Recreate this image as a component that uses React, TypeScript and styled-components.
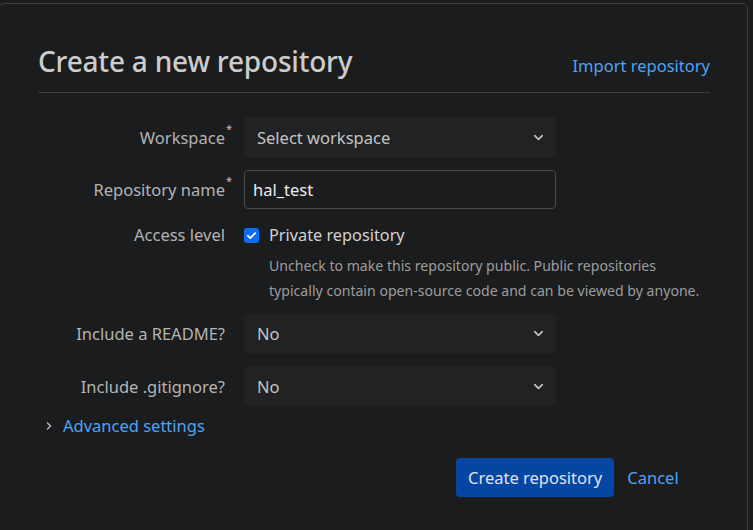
import React from 'react';
import styled, { createGlobalStyle } from 'styled-components';
import { ChevronDown, ChevronRight } from 'lucide-react';

const GlobalStyle = createGlobalStyle`
    html, body {
        margin: 0;
        padding: 0;
        background: #1b1c1e;
        font-family: "Noto Sans", "Open Sans", sans-serif;
        overflow: hidden;
    }
`;

const Page = styled.div`
    height: 530px;
    padding-top: 3px;
    box-sizing: border-box;
`;

const Panel = styled.div`
    margin-left: -2px;
    width: 750px;
    height: 560px;
    box-sizing: border-box;
    border: 1px solid #3b3c3e;
    border-radius: 6px;
    background: #1b1c1e;
    padding: 38px 37px 0 39px;
`;

const Header = styled.div`
    display: flex;
    align-items: baseline;
    justify-content: space-between;
    padding-bottom: 12px;
    border-bottom: 1px solid #3d3e40;
`;

const Title = styled.h1`
    margin: 0;
    font-size: 28px;
    font-weight: 500;
    color: #cccccc;
    letter-spacing: -0.2px;
`;

const Link = styled.a<{ $size?: number }>`
    color: #4ea3f5;
    font-size: ${p => p.$size ?? 16.5}px;
    text-decoration: none;
    cursor: pointer;
`;

const Form = styled.div`
    display: flex;
    flex-direction: column;
    gap: 13px;
    padding-top: 24px;
`;

const Row = styled.div<{ $top?: boolean }>`
    display: grid;
    grid-template-columns: 194px 312px;
    column-gap: 12px;
    align-items: ${p => (p.$top ? 'start' : 'center')};
`;

const Label = styled.label<{ $lineHeight?: number }>`
    text-align: right;
    padding-right: 7px;
    font-size: 16.5px;
    line-height: ${p => (p.$lineHeight ? `${p.$lineHeight}px` : 'normal')};
    color: #b4b4b4;
    white-space: nowrap;
`;

const LabelText = styled.span`
    position: relative;
`;

const Star = styled.span`
    position: absolute;
    right: -7px;
    top: -5px;
    color: #e7b6b6;
    font-size: 11px;
`;

const Select = styled.div`
    height: 40px;
    box-sizing: border-box;
    display: flex;
    align-items: center;
    justify-content: space-between;
    padding: 0 10px 0 13px;
    background: #202224;
    border-radius: 4px;
    font-size: 16.5px;
    color: #c4c4c4;
`;

const Input = styled.div`
    height: 39px;
    box-sizing: border-box;
    display: flex;
    align-items: center;
    padding: 0 8px;
    border: 1px solid #4a4b4d;
    border-radius: 4px;
    font-size: 16.5px;
    color: #ececec;
`;

const AccessBlock = styled.div`
    display: flex;
    flex-direction: column;
    margin-bottom: -3px;
`;

const CheckLine = styled.div`
    display: flex;
    align-items: center;
    gap: 10px;
    height: 26px;
`;

const Box = styled.span`
    width: 15px;
    height: 15px;
    border-radius: 3px;
    background: #0b6df6;
    display: flex;
    align-items: center;
    justify-content: center;
`;

const CheckText = styled.span`
    font-size: 16.3px;
    color: #d2d2d2;
`;

const Help = styled.p`
    margin: 5px 0 0 25px;
    white-space: nowrap;
    font-size: 14.1px;
    line-height: 25px;
    color: #9c9c9c;
`;

const Advanced = styled.div`
    display: flex;
    align-items: center;
    gap: 8px;
    margin-top: -5px;
    margin-left: 5px;
    color: #c4c4c4;
`;

const Actions = styled.div`
    display: flex;
    align-items: center;
    gap: 13px;
    margin-top: 8px;
    padding-left: 418px;
`;

const Button = styled.button`
    height: 39px;
    padding: 0 12px;
    border: none;
    border-radius: 4px;
    background: #0546a2;
    color: #e2e2e2;
    font-family: inherit;
    font-size: 16.5px;
`;

function Dropdown({ value }: { value: string }) {
    return (
        <Select>
            <span>{value}</span>
            <ChevronDown size={15} strokeWidth={2.6} color="#c4c4c4" />
        </Select>
    );
}

function FieldLabel({ text, required }: { text: string; required?: boolean }) {
    return (
        <Label>
            <LabelText>
                {text}
                {required && <Star>*</Star>}
            </LabelText>
        </Label>
    );
}

export default function App() {
    return (
        <Page>
            <GlobalStyle />
            <Panel>
                <Header>
                    <Title>Create a new repository</Title>
                    <Link>Import repository</Link>
                </Header>
                <Form>
                    <Row>
                        <FieldLabel text="Workspace" required />
                        <Dropdown value="Select workspace" />
                    </Row>
                    <Row>
                        <FieldLabel text="Repository name" required />
                        <Input>hal_test</Input>
                    </Row>
                    <Row $top>
                        <Label $lineHeight={26}>Access level</Label>
                        <AccessBlock>
                            <CheckLine>
                                <Box>
                                    <svg width="11" height="11" viewBox="0 0 12 12">
                                        <path d="M2 6.2l2.6 2.6L10 3.4" fill="none" stroke="#fff" strokeWidth="2" strokeLinecap="round" strokeLinejoin="round" />
                                    </svg>
                                </Box>
                                <CheckText>Private repository</CheckText>
                            </CheckLine>
                            <Help>
                                Uncheck to make this repository public. Public repositories
                                <br />
                                typically contain open-source code and can be viewed by anyone.
                            </Help>
                        </AccessBlock>
                    </Row>
                    <Row>
                        <FieldLabel text="Include a README?" />
                        <Dropdown value="No" />
                    </Row>
                    <Row>
                        <FieldLabel text="Include .gitignore?" />
                        <Dropdown value="No" />
                    </Row>
                    <Advanced>
                        <ChevronRight size={12} strokeWidth={2.5} />
                        <Link>Advanced settings</Link>
                    </Advanced>
                    <Actions>
                        <Button>Create repository</Button>
                        <Link>Cancel</Link>
                    </Actions>
                </Form>
            </Panel>
        </Page>
    );
}
